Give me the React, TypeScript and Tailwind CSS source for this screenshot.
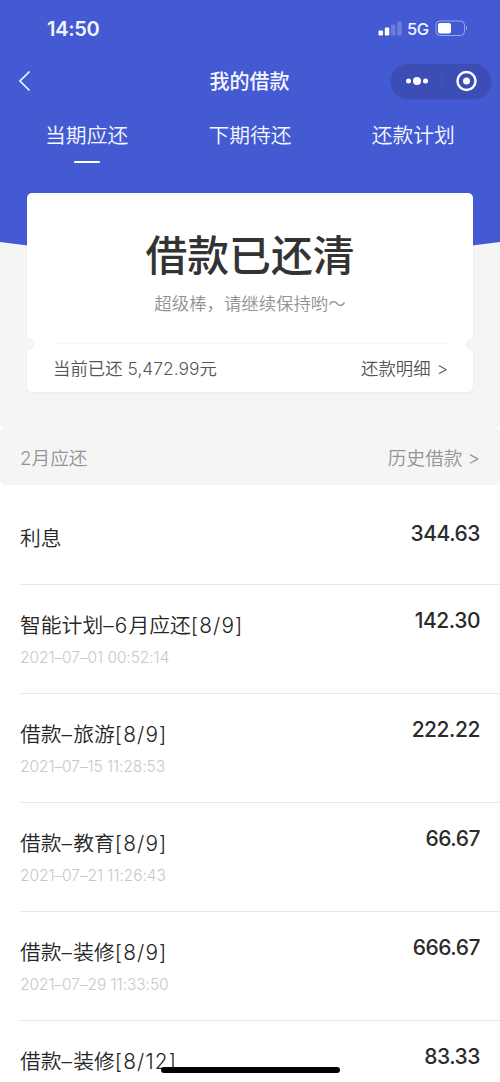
import React, { useState } from 'react';

interface Bill {
  title: string;
  time?: string;
  amount: string;
}

const tabs = ['当期应还', '下期待还', '还款计划'];

const bills: Bill[] = [
  { title: '利息', amount: '344.63' },
  { title: '智能计划–6月应还[8/9]', time: '2021–07–01 00:52:14', amount: '142.30' },
  { title: '借款–旅游[8/9]', time: '2021–07–15 11:28:53', amount: '222.22' },
  { title: '借款–教育[8/9]', time: '2021–07–21 11:26:43', amount: '66.67' },
  { title: '借款–装修[8/9]', time: '2021–07–29 11:33:50', amount: '666.67' },
  { title: '借款–装修[8/12]', amount: '83.33' },
];

const StatusBar: React.FC = () => (
  <div className="flex h-[56px] items-center justify-between pl-[47px] pr-8 pt-px text-[#f1f5ff]">
    <span className="text-[20px] font-semibold leading-none tracking-[-0.3px]">14:50</span>
    <div className="flex items-center">
      <svg width="24" height="16" viewBox="0 0 24 16" fill="#fff">
        <rect x="0.5" y="9.5" width="4.5" height="5" rx="1" />
        <rect x="6.8" y="6.5" width="4.5" height="8" rx="1" />
        <rect x="13" y="3.5" width="4.5" height="11" rx="1" opacity="0.22" />
        <rect x="19.2" y="0.5" width="4.5" height="14" rx="1" opacity="0.22" />
      </svg>
      <span className="ml-[5px] w-[22px] whitespace-nowrap pt-px text-[16.5px] font-medium leading-none tracking-[-0.5px]">5G</span>
      <svg className="ml-[6px]" width="33" height="18" viewBox="0 0 33 18" fill="none">
        <rect x="1" y="1" width="28.5" height="14.5" rx="4" stroke="#fff" strokeOpacity="0.45" />
        <rect x="3" y="3" width="13" height="10.5" rx="2" fill="#fff" />
        <path d="M31 6c1.6.8 1.6 3.7 0 4.5z" fill="#fff" fillOpacity="0.5" />
      </svg>
    </div>
  </div>
);

const NavBar: React.FC = () => (
  <div className="flex h-[50px] items-center justify-between pl-[18px] pr-[8px]">
    <div className="w-[102px]">
      <svg width="14" height="22" viewBox="0 0 14 22" fill="none">
        <path d="M11.5 1.5L2 11l9.5 9.5" stroke="#f1f5ff" strokeWidth="1.7" />
      </svg>
    </div>
    <h1 className="mr-[11px] pt-[2px] text-center text-[20px] font-medium leading-none text-[#f5f8ff]">我的借款</h1>
    <div className="flex h-[37px] w-[102px] items-center rounded-full border border-[#4356c4] bg-[#3c4db5]">
      <svg width="100" height="35" viewBox="0 0 100 35" fill="#fff">
        <circle cx="17.5" cy="17" r="2.5" />
        <circle cx="26" cy="17" r="4" />
        <circle cx="34.5" cy="17" r="2.5" />
        <path d="M50.5 7v20" stroke="#4656c0" />
        <circle cx="75.5" cy="17" r="9" fill="none" stroke="#fff" strokeWidth="2.4" />
        <circle cx="75.5" cy="17" r="3.5" />
      </svg>
    </div>
  </div>
);

const SummaryCard: React.FC = () => (
  <div className="relative mx-[27px] h-[199px] rounded-[5px] bg-white shadow-[0_1px_3px_rgba(0,0,0,0.05)]">
    <div className="flex h-[150px] flex-col items-center pt-[37px]">
      <p className="text-[41.8px] font-medium leading-[52px] text-[#333]">借款已还清</p>
      <p className="mt-[13px] text-[17.4px] font-[350] leading-[18px] text-[#929292]">超级棒，请继续保持哟～</p>
    </div>
    <div className="ml-[26px] mr-[25px] flex h-[49px] items-center justify-between border-t border-[#f7f7f7] pt-[2px] text-[17.4px] font-[350] text-[#555]">
      <span className="whitespace-nowrap">
        当前已还<span className="pl-[5px]">5,472.99</span>元
      </span>
      <span>
        还款明细<span className="pl-[6px]">&gt;</span>
      </span>
    </div>
    <span className="absolute -left-[7px] top-[144px] size-[14px] rounded-full bg-[#f5f5f5]" />
    <span className="absolute -right-[7px] top-[144px] size-[14px] rounded-full bg-[#f5f5f5]" />
  </div>
);

// latin runs are set a little wider than the chinese text around them
const BillTitle: React.FC<{ title: string }> = ({ title }) => (
  <p className="whitespace-nowrap text-[20.8px] font-[350] leading-[30px] text-[#262626]">
    {title.split(/([–\d[\]/]+)/).map((part, index) => (
      <span key={index} className={index % 2 ? 'tracking-[1.15px]' : ''}>
        {part}
      </span>
    ))}
  </p>
);

const BillRow: React.FC<{ bill: Bill; first: boolean }> = ({ bill, first }) => (
  <li
    className={`ml-5 flex justify-between border-b border-[#e9e9e9] pr-5 ${
      first ? 'h-[100px] pt-[39px]' : 'h-[109px] pt-[26px]'
    }`}
  >
    <div>
      <BillTitle title={bill.title} />
      {bill.time && (
        <p className="mt-[8px] text-[15.5px] font-[350] leading-[18px] tracking-[-0.07px] text-[#c8c8c8]">{bill.time}</p>
      )}
    </div>
    <span className="-mt-[2px] text-[21px] font-medium leading-[24px] tracking-[-0.45px] text-[#2b2b2b]">
      {bill.amount}
    </span>
  </li>
);

const App: React.FC = () => {
  const [activeTab, setActiveTab] = useState(0);

  return (
    <div
      lang="zh-CN"
      className="relative h-[1082px] w-[500px] overflow-hidden bg-white font-['Inter','Noto_Sans_CJK_SC',sans-serif]"
    >
      <header className="grid h-[427px] bg-[#f5f5f5]">
        <svg className="col-start-1 row-start-1" width="500" height="270" viewBox="0 0 500 270">
          <path d="M0 0h500v242Q250 276 0 242z" fill="#435ad2" />
        </svg>
        <div className="relative col-start-1 row-start-1">
          <StatusBar />
          <NavBar />
          <nav className="flex h-[87px] px-[5px]">
            {tabs.map((tab, index) => (
              <button
                key={tab}
                onClick={() => setActiveTab(index)}
                className="flex flex-1 flex-col items-center pt-[15px] text-[20.8px] font-[350] leading-[30px] text-[#f5f8ff]"
              >
                {tab}
                {index === activeTab && <span className="mt-[10px] h-[2px] w-[26px] rounded-full bg-white" />}
              </button>
            ))}
          </nav>
          <SummaryCard />
        </div>
      </header>

      <div className="bg-white">
        <div className="flex h-[58px] items-center justify-between rounded-[6px] bg-[#f5f5f5] px-5 pt-[7px] text-[18.7px] font-[350] text-[#949494]">
          <span>2月应还</span>
          <span>历史借款 &gt;</span>
        </div>
      </div>

      <ul>
        {bills.map((bill, index) => (
          <BillRow key={index} bill={bill} first={index === 0} />
        ))}
      </ul>

      <div className="absolute bottom-[9px] left-[161px] h-[6px] w-[179px] rounded-full bg-black" />
    </div>
  );
};

export default App;
